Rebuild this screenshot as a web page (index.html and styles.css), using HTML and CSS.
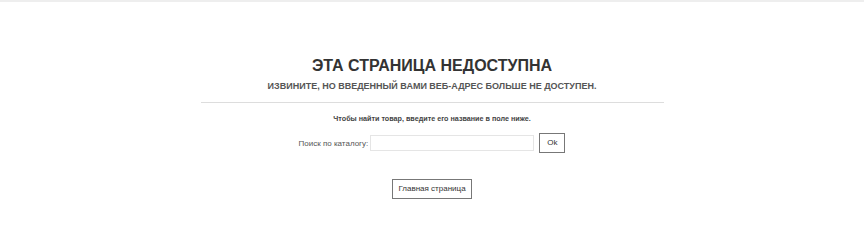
FILE: index.html
```html
<!DOCTYPE html>
<html lang="ru">
<head>
    <meta charset="UTF-8">
    <title>Эта страница недоступна</title>
    <link rel="stylesheet" href="styles.css">
</head>
<body>
    <div class="topbar"></div>
    <div class="pagenotfound">
        <h1>Эта страница недоступна</h1>
        <h3>Извините, но введенный вами веб-адрес больше не доступен.</h3>
        <p class="hint">Чтобы найти товар, введите его название в поле ниже.</p>
        <form class="search-form">
            <label for="search_query">Поиск по каталогу:</label>
            <input type="text" id="search_query" name="search_query">
            <button type="button" class="btn">Ok</button>
        </form>
        <div class="home-link">
            <a href="#" class="btn">Главная страница</a>
        </div>
    </div>
</body>
</html>
```

FILE: styles.css
```css
body {
    margin: 0;
    font-family: "Liberation Sans", Arial, sans-serif;
    color: #333;
    background-color: #fff;
}
.topbar {
    height: 2px;
    background-color: #eee;
}
.pagenotfound {
    width: 463px;
    margin: 0 auto;
    padding-top: 54px;
    text-align: center;
}
.pagenotfound h1 {
    margin: 0;
    font-size: 16px;
    line-height: 20px;
    text-transform: uppercase;
    color: #333;
}
.pagenotfound h3 {
    margin: 4px 0 0;
    padding-bottom: 10px;
    border-bottom: 1px solid #ddd;
    font-size: 9px;
    line-height: 12px;
    text-transform: uppercase;
    color: #555;
}
.hint {
    margin: 11px 0 0;
    font-size: 7.2px;
    font-weight: bold;
    line-height: 10px;
    color: #444;
}
.search-form {
    display: flex;
    justify-content: center;
    align-items: center;
    margin-top: 9px;
}
.search-form label {
    font-size: 8px;
    color: #555;
}
.search-form input {
    width: 158px;
    height: 14px;
    padding: 0 2px;
    border: 1px solid #e5e5e5;
    margin: 0 5px 0 2px;
}
.btn {
    display: inline-block;
    padding: 4px 7px;
    border: 1px solid #777;
    background-color: #fff;
    font-family: "Liberation Sans", Arial, sans-serif;
    font-size: 8px;
    line-height: 10px;
    color: #333;
    text-decoration: none;
    vertical-align: top;
}
.home-link {
    margin-top: 26px;
    line-height: 0;
}
.home-link .btn {
    padding: 4px 5px;
}
```
